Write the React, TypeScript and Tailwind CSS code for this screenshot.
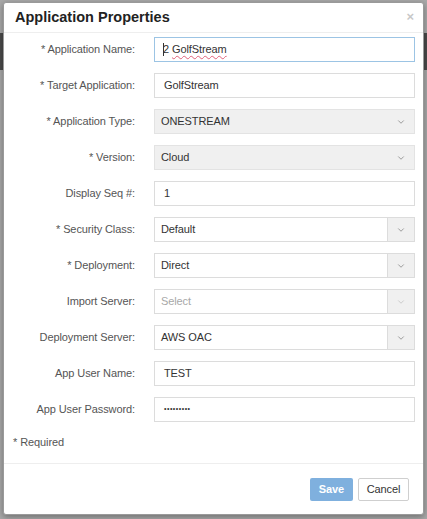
import { ChevronDown } from "lucide-react";

type Field = {
  label: string;
  value: string;
  kind: "input" | "gray" | "combo";
  disabled?: boolean;
  focused?: boolean;
};

const FIELDS: Field[] = [
  { label: "* Application Name:", value: "2 GolfStream", kind: "input", focused: true },
  { label: "* Target Application:", value: "GolfStream", kind: "input" },
  { label: "* Application Type:", value: "ONESTREAM", kind: "gray" },
  { label: "* Version:", value: "Cloud", kind: "gray" },
  { label: "Display Seq #:", value: "1", kind: "input" },
  { label: "* Security Class:", value: "Default", kind: "combo" },
  { label: "* Deployment:", value: "Direct", kind: "combo" },
  { label: "Import Server:", value: "Select", kind: "combo", disabled: true },
  { label: "Deployment Server:", value: "AWS OAC", kind: "combo" },
  { label: "App User Name:", value: "TEST", kind: "input" },
  { label: "App User Password:", value: "•••••••••", kind: "input" },
];

function Chevron({ light }: { light?: boolean }) {
  return <ChevronDown size={10} strokeWidth={2} className={light ? "text-[#c4c4c4]" : "text-[#8a8a8a]"} />;
}

function Control({ f }: { f: Field }) {
  if (f.kind === "gray") {
    return (
      <div className="flex h-[25px] w-[261px] items-center justify-between border border-[#e3e3e3] bg-[#f0f0f0] pl-[6px] pr-[8px] text-[#333]">
        <span>{f.value}</span>
        <Chevron />
      </div>
    );
  }
  if (f.kind === "combo") {
    return (
      <div className="flex h-[25px] w-[261px] border border-[#dcdcdc] bg-white">
        <div className={`flex flex-1 items-center pl-[6px] ${f.disabled ? "text-[#a8a8a8]" : "text-[#333]"}`}>{f.value}</div>
        <div className="flex w-[27px] items-center justify-center border-l border-[#dcdcdc] bg-[#f0f0f0]">
          <Chevron light={f.disabled} />
        </div>
      </div>
    );
  }
  if (f.focused) {
    return (
      <div className="flex h-[25px] w-[261px] items-center border border-[#9cc4e4] bg-white pl-[8px] text-[#333]">
        <span className="h-[13px] w-px bg-[#333]" />
        <span className="-ml-px">2</span>
        <span className="ml-[3px] underline decoration-wavy decoration-[#e0607a] decoration-1 underline-offset-2">GolfStream</span>
      </div>
    );
  }
  return (
    <div className={`flex h-[25px] w-[261px] items-center border border-[#dcdcdc] bg-white pl-[9px] text-[#333] ${f.value.startsWith("•") ? "text-[7px] tracking-[0.5px]" : ""}`}>
      {f.value}
    </div>
  );
}

export default function App() {
  return (
    <div
      className="relative h-[519px] w-[427px] overflow-hidden bg-[#a9a9a9] text-[11px] tracking-[-0.1px]"
      style={{ fontFamily: "Arial, 'Liberation Sans', sans-serif" }}
    >
      {/* page header behind the overlay */}
      <div className="absolute left-0 right-0 top-[33px] h-[37px] bg-[#4a4a4a]" />

      <div className="absolute left-[3px] top-[2px] flex h-[513px] w-[421px] flex-col rounded-[3px] border border-[#9a9a9a] bg-white shadow-[0_2px_6px_rgba(0,0,0,0.35)]">
        {/* Header */}
        <div className="relative flex h-[30px] items-center border-b border-[#eeeeee] pl-[11px]">
          <h2 className="text-[14.5px] font-bold tracking-normal text-[#222]">Application Properties</h2>
          <span className="absolute right-[9px] top-[4px] text-[13px] font-bold text-[#c8c8c8]">×</span>
        </div>

        {/* Body */}
        <div className="flex flex-1 flex-col pt-[4px]">
          <div className="flex flex-col gap-[11px]">
            {FIELDS.map((f) => (
              <div key={f.label} className="flex items-center">
                <label className="w-[131px] text-right text-[#555]">{f.label}</label>
                <div className="ml-[19px]">
                  <Control f={f} />
                </div>
              </div>
            ))}
          </div>
          <div className="mt-[12px] pl-[9px] text-[#555]">* Required</div>
        </div>

        {/* Footer */}
        <div className="flex h-[51px] items-center justify-end gap-[5px] border-t border-[#eeeeee] pr-[14px]">
          <button className="h-[23px] w-[43px] rounded-[2px] bg-[#7fb0de] font-bold text-white">Save</button>
          <button className="h-[23px] w-[51px] rounded-[2px] border border-[#cfcfcf] bg-white text-[#333]">Cancel</button>
        </div>
      </div>
    </div>
  );
}
